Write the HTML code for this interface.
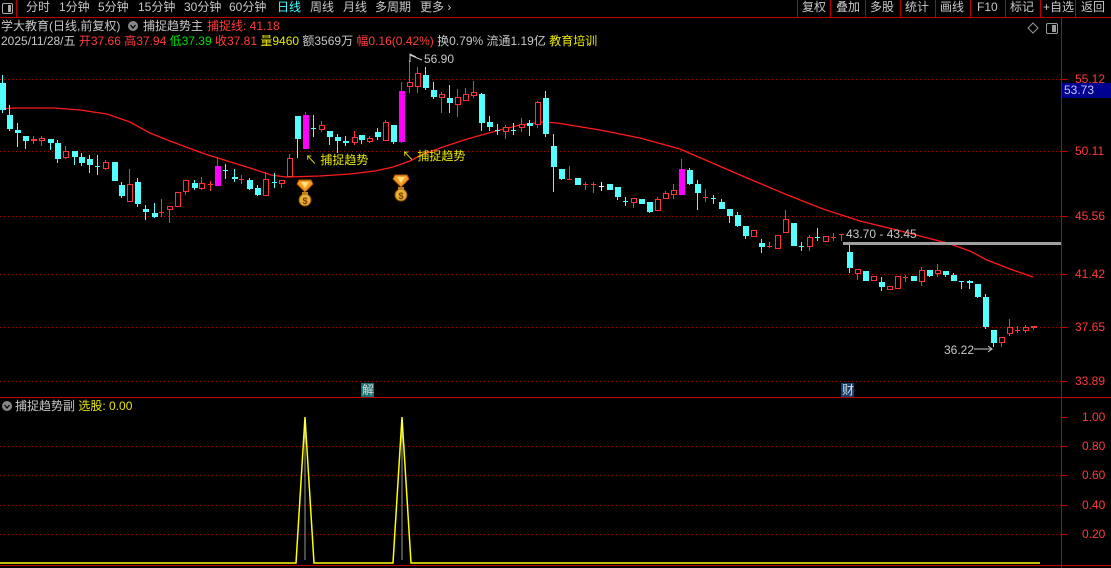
<!DOCTYPE html>
<html><head><meta charset="utf-8">
<style>
html,body{margin:0;padding:0;background:#000;width:1111px;height:568px;overflow:hidden}
body{position:relative;font-family:"Liberation Sans","Noto Sans CJK SC",sans-serif;font-size:12px;color:#c8c8c8}
.t{position:absolute;white-space:nowrap;line-height:14px}
.r{color:#ff3b3b}.g{color:#00e000}.y{color:#e8e800}.w{color:#d0d0d0}
svg{position:absolute;left:0;top:0}
</style></head><body>
<svg id="s" width="1111" height="568" xmlns="http://www.w3.org/2000/svg">
<g stroke="#c00000" fill="none">
<line x1="0" y1="17.5" x2="1111" y2="17.5"/>
<line x1="1061.5" y1="17" x2="1061.5" y2="568"/>
<line x1="0" y1="397.5" x2="1111" y2="397.5"/>
<line x1="0" y1="565.5" x2="1111" y2="565.5"/>
<line x1="797.5" y1="0" x2="797.5" y2="17"/><line x1="830.5" y1="0" x2="830.5" y2="17"/>
<line x1="865.5" y1="0" x2="865.5" y2="17"/><line x1="900.5" y1="0" x2="900.5" y2="17"/>
<line x1="935.5" y1="0" x2="935.5" y2="17"/><line x1="970.5" y1="0" x2="970.5" y2="17"/>
<line x1="1005.5" y1="0" x2="1005.5" y2="17"/><line x1="1040.5" y1="0" x2="1040.5" y2="17"/>
<line x1="1075.5" y1="0" x2="1075.5" y2="17"/><line x1="16.5" y1="0" x2="16.5" y2="17"/>
</g>
<g stroke="#b00000" stroke-dasharray="1,3">
<line x1="0" y1="79.5" x2="1061" y2="79.5"/><line x1="0" y1="151.5" x2="1061" y2="151.5"/>
<line x1="0" y1="216.5" x2="1061" y2="216.5"/><line x1="0" y1="274.5" x2="1061" y2="274.5"/>
<line x1="0" y1="327.5" x2="1061" y2="327.5"/><line x1="0" y1="381.5" x2="1061" y2="381.5"/>
<line x1="0" y1="446.5" x2="1061" y2="446.5"/><line x1="0" y1="475.5" x2="1061" y2="475.5"/>
<line x1="0" y1="505.5" x2="1061" y2="505.5"/><line x1="0" y1="534.5" x2="1061" y2="534.5"/>
</g>
<g stroke="#c00000">
<line x1="1062" y1="79.5" x2="1067" y2="79.5"/><line x1="1062" y1="151.5" x2="1067" y2="151.5"/>
<line x1="1062" y1="216.5" x2="1067" y2="216.5"/><line x1="1062" y1="274.5" x2="1067" y2="274.5"/>
<line x1="1062" y1="327.5" x2="1067" y2="327.5"/><line x1="1062" y1="381.5" x2="1067" y2="381.5"/>
<line x1="1062" y1="417.5" x2="1067" y2="417.5"/><line x1="1062" y1="446.5" x2="1067" y2="446.5"/>
<line x1="1062" y1="475.5" x2="1067" y2="475.5"/><line x1="1062" y1="505.5" x2="1067" y2="505.5"/>
<line x1="1062" y1="534.5" x2="1067" y2="534.5"/>
</g>
<!-- left toolbar icon -->
<rect x="2.5" y="3.5" width="10" height="10" rx="1.5" fill="none" stroke="#aaa"/>
<rect x="8" y="5" width="3" height="7" fill="#aaa"/>
<!-- top right icons -->
<path d="M1033 23 L1038 28 L1033 33 L1028 28 Z" fill="none" stroke="#999"/>
<rect x="1046.5" y="23.5" width="11" height="10" rx="1.5" fill="none" stroke="#999"/>
<rect x="1052" y="25" width="4" height="7" fill="#999"/>
<!-- MA line -->
<polyline fill="none" stroke="#ff1a1a" stroke-width="1.3" points="0,109 14,108 54,108 80,110 107,114 130,122 150,133 170,141 186,147 205,154 221,159 250,168 271,175 286,177 320,176 350,174 375,171 393,167 410,161 421,155 440,148 464,140 485,134 500,130 520,125 543,122 557,123 600,130 640,138 680,149 710,162 747,178 790,196 823,209 860,221 893,229 920,236 947,243 970,251 987,260 1010,269 1033,277"/>
<g id="cd"></g>
<!-- gray range bar -->
<rect x="843" y="242" width="218" height="3" fill="#a0a0a0"/>
<!-- arrows -->
<path d="M410 62 L410 54 L416 57 M410 55 L422 60" stroke="#ccc" fill="none"/>
<path d="M974 349 L992 349 M988 346 L992 349 L988 352" stroke="#ccc" fill="none"/>
<!-- money bags -->
<g id="bag1" transform="translate(297,179)">
<path d="M2 1 L14 1 L16 5 L8 13 L0 5 Z" fill="#f5a020" stroke="#b05000"/>
<path d="M4 3 L12 3 L8 9 Z" fill="#ffe080"/>
<ellipse cx="8" cy="21" rx="6" ry="6" fill="#e8b030" stroke="#8a5000"/>
<rect x="5" y="13" width="6" height="3" fill="#c08020"/>
<text x="8" y="25" font-size="9" text-anchor="middle" fill="#7a3a00" font-weight="bold" font-family="Liberation Sans">$</text>
</g>
<use href="#bag1" transform="translate(96,-5)"/>
<!-- sub panel yellow -->
<polyline fill="none" stroke="#ffff00" stroke-width="1.5" points="0,563 296,563 305,417 314,563 393,563 402,417 411,563 1040,563"/>
<line x1="305" y1="420" x2="305" y2="560" stroke="#fff" stroke-width="0.6"/>
<line x1="402" y1="420" x2="402" y2="560" stroke="#fff" stroke-width="0.6"/>
<!-- tags -->
<rect x="361" y="383" width="13" height="14" fill="#137070"/>
<rect x="841" y="383" width="13" height="14" fill="#143e70"/>
<!-- sub header circle -->
<circle cx="7" cy="406" r="5" fill="#888"/>
<path d="M4.5 405 L7 408 L9.5 405" stroke="#000" stroke-width="1.3" fill="none"/>
<circle cx="133" cy="26" r="5" fill="#888"/>
<path d="M130.5 25 L133 28 L135.5 25" stroke="#000" stroke-width="1.3" fill="none"/>
<rect x="1062" y="83" width="49" height="15" fill="#000090"/>
</svg>

<div class="t" style="left:26px;top:0">分时</div>
<div class="t" style="left:59px;top:0">1分钟</div>
<div class="t" style="left:98px;top:0">5分钟</div>
<div class="t" style="left:138px;top:0">15分钟</div>
<div class="t" style="left:184px;top:0">30分钟</div>
<div class="t" style="left:229px;top:0">60分钟</div>
<div class="t" style="left:277px;top:0;color:#40ffff">日线</div>
<div class="t" style="left:310px;top:0">周线</div>
<div class="t" style="left:343px;top:0">月线</div>
<div class="t" style="left:375px;top:0">多周期</div>
<div class="t" style="left:420px;top:0">更多 ›</div>
<div class="t" style="left:802px;top:0">复权</div>
<div class="t" style="left:836px;top:0">叠加</div>
<div class="t" style="left:870px;top:0">多股</div>
<div class="t" style="left:905px;top:0">统计</div>
<div class="t" style="left:940px;top:0">画线</div>
<div class="t" style="left:977px;top:0">F10</div>
<div class="t" style="left:1010px;top:0">标记</div>
<div class="t" style="left:1043px;top:0">+自选</div>
<div class="t" style="left:1081px;top:0">返回</div>

<div class="t" style="left:1px;top:19px">学大教育(日线,前复权)</div>
<div class="t" style="left:143px;top:19px">捕捉趋势主</div>
<div class="t r" style="left:207px;top:19px">捕捉线: 41.18</div>
<div class="t" style="left:1px;top:34px">2025/11/28/五 <span class="r">开37.66 高37.94</span> <span class="g">低37.39</span> <span class="r">收37.81</span> <span class="y">量9460</span> 额3569万 <span class="r">幅0.16(0.42%)</span> 换0.79% 流通1.19亿 <span class="y">教育培训</span></div>

<div class="t" style="left:424px;top:52px">56.90</div>
<div class="t y" style="left:305px;top:153px">↖ 捕捉趋势</div>
<div class="t y" style="left:402px;top:149px">↖ 捕捉趋势</div>
<div class="t" style="left:846px;top:227px">43.70 - 43.45</div>
<div class="t" style="left:944px;top:343px">36.22</div>
<div class="t" style="left:362px;top:383px;color:#ddd">解</div>
<div class="t" style="left:842px;top:383px;color:#ddd">财</div>

<div class="t r" style="left:1075px;top:72px">55.12</div>
<div class="t" style="left:1064px;top:83px;color:#c8c8ff">53.73</div>
<div class="t r" style="left:1075px;top:144px">50.11</div>
<div class="t r" style="left:1075px;top:209px">45.56</div>
<div class="t r" style="left:1075px;top:267px">41.42</div>
<div class="t r" style="left:1075px;top:320px">37.65</div>
<div class="t r" style="left:1075px;top:374px">33.89</div>
<div class="t r" style="left:1082px;top:410px">1.00</div>
<div class="t r" style="left:1082px;top:439px">0.80</div>
<div class="t r" style="left:1082px;top:468px">0.60</div>
<div class="t r" style="left:1082px;top:498px">0.40</div>
<div class="t r" style="left:1082px;top:527px">0.20</div>

<div class="t" style="left:15px;top:399px">捕捉趋势副 <span class="y">选股: 0.00</span></div>

<script>
var D=[
[2,'c',83,110,75,113],[9,'c',115,129,105,131],[17,'c',130,133,123,147],[25,'c',136,141,136,149],[33,'r',139,141,136,144],[41,'r',138,141,136,146],[50,'c',139,143,139,150],[57,'c',143,159,140,163],[65,'r',151,158,146,159],[74,'c',151,157,151,165],[81,'c',157,163,153,166],[89,'c',159,165,155,173],[97,'c',166,167,155,175],[105,'r',162,169,160,170],[114,'c',162,181,162,181],[121,'c',185,196,182,198],[129,'r',184,202,169,202],[137,'c',182,204,178,207],[145,'c',209,212,205,220],[154,'c',213,217,203,218],[161,'r',212,213,199,217],[169,'r',206,210,206,223],[177,'r',192,207,192,207],[185,'r',180,192,180,195],[194,'c',183,188,180,190],[201,'r',183,189,177,190],[210,'r',184,185,181,191],[217,'m',166,186,157,186],[225,'c',170,171,164,179],[234,'c',177,179,169,182],[241,'r',179,180,175,184],[249,'c',180,189,178,190],[257,'c',188,195,185,196],[265,'r',179,196,172,196],[274,'c',182,183,173,188],[281,'r',180,184,180,188],[289,'r',158,177,154,177],[297,'c',116,139,116,158],[305,'m',115,149,112,149],[313,'c',128,129,115,137],[321,'r',125,130,121,132],[329,'c',131,137,131,145],[337,'c',137,141,134,153],[345,'c',141,143,136,146],[354,'r',137,143,131,145],[361,'c',135,140,135,144],[369,'r',138,142,136,143],[377,'c',132,137,128,140],[385,'r',122,141,120,141],[393,'c',125,142,125,144],[401,'m',91,142,82,143],[409,'r',82,87,60,93],[417,'r',73,87,67,93],[425,'c',75,88,67,90],[433,'c',90,97,82,99],
[441,'r',94,98,92,113],[449,'c',98,103,85,113],[457,'r',97,105,89,117],[465,'r',94,101,88,101],[473,'r',92,96,81,98],[481,'c',94,123,93,131],[489,'c',122,127,116,131],[497,'c',130,131,124,135],[505,'r',127,132,125,139],[513,'c',130,131,123,135],[521,'r',124,128,118,132],[529,'c',123,126,120,136],[537,'r',102,125,101,128],[545,'c',98,134,91,137],
[553,'c',146,167,134,192],[561,'c',169,179,169,180],[569,'r',179,180,166,180],[577,'c',178,185,178,185],[585,'r',184,185,182,190],[593,'r',184,185,182,193],[601,'w',186,187,182,191],[609,'c',184,190,184,190],[617,'c',187,197,187,200],[625,'c',201,202,197,206],[633,'r',198,203,198,208],[641,'c',199,204,199,204],[649,'c',202,212,202,213],[657,'r',199,211,197,211],[665,'r',193,199,191,199],[673,'r',190,195,184,199],[681,'m',169,195,159,195],[689,'c',170,184,168,185],[697,'c',184,193,180,210],[705,'r',197,198,189,202],[713,'c',198,199,195,204],[721,'c',202,209,199,209],[729,'c',209,216,209,223],[737,'c',215,226,212,227],[745,'c',226,236,226,239],[753,'r',230,237,230,237],[761,'c',243,247,239,253],[769,'r',246,247,242,248],[777,'r',235,249,235,249],[785,'r',219,233,210,233],[793,'c',223,246,223,246],[801,'c',246,247,242,251],[809,'r',237,247,235,251],[817,'c',237,238,228,241],[825,'r',236,242,236,242],[833,'r',237,238,233,241],[841,'r',234,235,234,241],[849,'c',252,268,245,273],[857,'r',269,274,269,280],[865,'c',271,281,271,281],[873,'r',276,281,276,281],[881,'c',282,287,277,291],[889,'r',286,290,286,290],[897,'r',276,289,276,289],[905,'r',277,278,275,282],[913,'c',276,281,276,281],[921,'r',270,282,267,286],[929,'c',270,276,270,277],[937,'r',270,274,264,277],[945,'c',271,275,271,277],[953,'c',275,281,273,281],[961,'c',281,282,281,289],[969,'c',281,283,280,289],[977,'c',284,297,284,298],[985,'c',297,327,294,329],[993,'c',330,343,330,347],[1001,'r',337,343,337,347],[1009,'r',327,334,319,336],[1017,'r',330,331,326,333],[1025,'r',327,331,325,333],[1033,'r',326,328,326,330]];
var col={c:'#55ffff',r:'#ff3333',m:'#ff00ff',w:'#ffffff'};
var g=document.getElementById('cd'),h='';
D.forEach(function(d){var x=d[0],c=col[d[1]],t=d[2],b=d[3];
h+='<line x1="'+(x+.5)+'" y1="'+d[4]+'" x2="'+(x+.5)+'" y2="'+d[5]+'" stroke="'+c+'"/>';
if(b-t<=1){h+='<line x1="'+(x-2)+'" y1="'+(t+.5)+'" x2="'+(x+3)+'" y2="'+(t+.5)+'" stroke="'+c+'"/>';}
else if(d[1]=='r'){h+='<rect x="'+(x-2)+'.5" y="'+t+'.5" width="5" height="'+(b-t-1)+'" fill="#000" stroke="'+c+'"/>';}
else{h+='<rect x="'+(x-2)+'" y="'+t+'" width="6" height="'+(b-t)+'" fill="'+c+'"/>';}
});
g.innerHTML=h;
</script>
</body></html>
